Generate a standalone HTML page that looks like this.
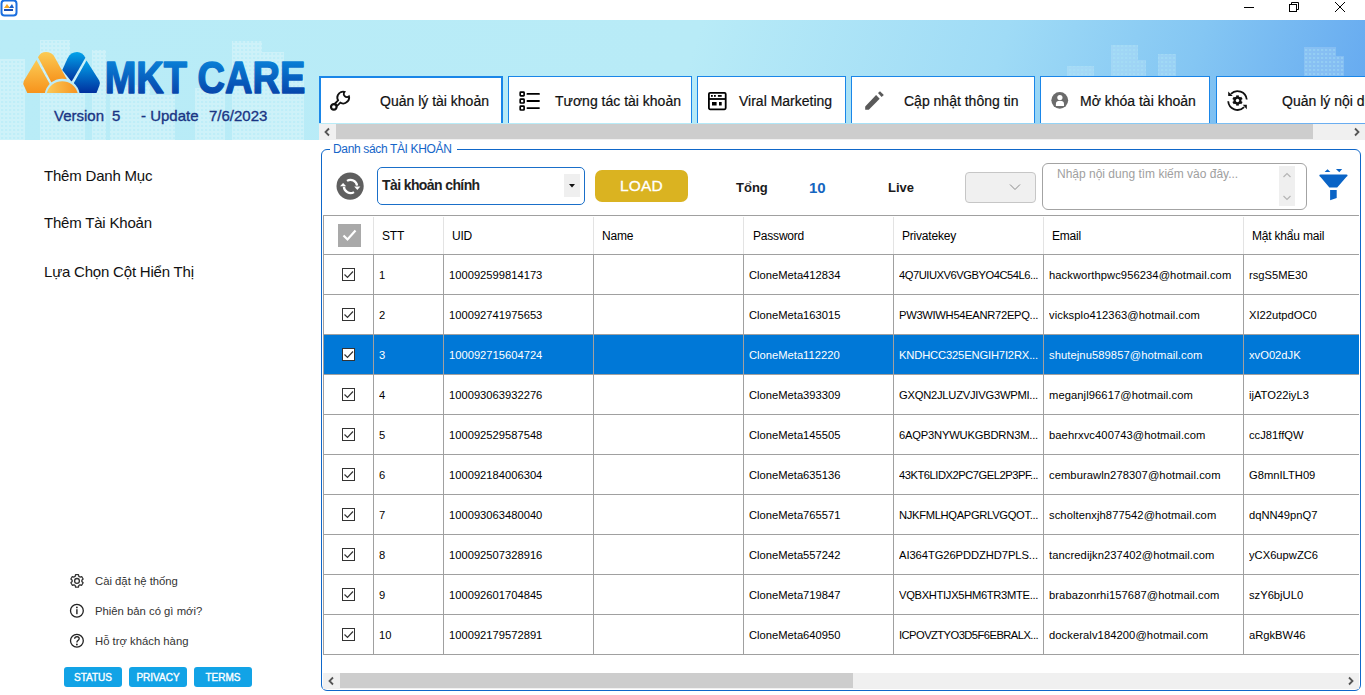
<!DOCTYPE html>
<html><head><meta charset="utf-8">
<style>
*{margin:0;padding:0;box-sizing:border-box}
html,body{width:1365px;height:695px;overflow:hidden;background:#fff;font-family:"Liberation Sans",sans-serif;color:#000}
.a{position:absolute}
.t{position:absolute;white-space:nowrap;line-height:1}
#banner{left:0;top:20px;width:1365px;height:120px;background:linear-gradient(108deg,#b9ecf7 0%,#b8ebf7 50%,#9fdbf6 72%,#84c6f3 86%,#64a8f0 100%);overflow:hidden}
.tab{position:absolute;top:76px;height:47px;background:#fff;border:1px solid #1a86e8;border-bottom:none}
.tab .lbl{position:absolute;top:16px;font-size:14px;color:#111;-webkit-text-stroke:0.2px #111;white-space:nowrap;line-height:16px}
.sb{position:absolute;background:#f0f0f0}
.thumb{position:absolute;background:#cdcdcd}
.grid{position:absolute;left:323px;top:215px;width:1036px;height:440px;overflow:hidden}
.hl{position:absolute;left:0;width:1036px;height:1px;background:#a0a0a0}
.vl{position:absolute;top:40px;width:1px;height:400px;background:#a0a0a0}
.vh{position:absolute;top:2px;width:1px;height:37px;background:#e3e3e3}
.hd{position:absolute;top:14px;font-size:12px;letter-spacing:-0.2px;line-height:14px;white-space:nowrap}
.row{position:absolute;left:0;width:1036px;height:40px}
.row .c{position:absolute;top:13px;font-size:11.2px;line-height:14px;white-space:nowrap;overflow:hidden}
.sel{background:#0078d7;color:#fff}
.cb{position:absolute;left:19px;top:13px;width:13px;height:13px;border:1px solid #333;background:#fff}
.menu{position:absolute;left:44px;font-size:15px;letter-spacing:-0.2px;color:#111;white-space:nowrap;line-height:1}
.set{position:absolute;left:95px;font-size:11.3px;color:#333;white-space:nowrap;line-height:1}
.btn{position:absolute;top:667px;width:58px;height:20px;background:#12a3e6;border-radius:3px;color:#fff;font-size:10px;font-weight:normal;-webkit-text-stroke:0.35px #fff;text-align:center;line-height:22px}
</style></head><body>

<!-- title bar -->
<div class="a" style="left:0;top:0;width:1365px;height:20px;background:#fff"></div>
<svg class="a" style="left:0;top:0" width="20" height="20" viewBox="0 0 20 20">
  <rect x="1.5" y="0.5" width="15" height="15" rx="3" fill="#fff" stroke="#1a6fe0" stroke-width="2"/>
  <path d="M4 8 L7 4 L10 8 Z" fill="#f5a623"/><path d="M9 8 L12 4 L14 8 Z" fill="#1a5fc8"/>
  <rect x="4" y="9" width="9" height="2" fill="#1a4fb0"/>
</svg>
<svg class="a" style="left:1230px;top:0" width="135" height="20" viewBox="0 0 135 20">
  <line x1="14" y1="7.5" x2="24" y2="7.5" stroke="#000" stroke-width="1"/>
  <rect x="59.5" y="4.5" width="7" height="7" fill="none" stroke="#000" stroke-width="1"/>
  <path d="M61.5 4.5 V2.5 H68.5 V9.5 H66.5" fill="none" stroke="#000" stroke-width="1"/>
  <path d="M105 2 L115 12 M115 2 L105 12" stroke="#000" stroke-width="1"/>
</svg>

<!-- banner -->
<div id="banner" class="a"></div>



<!-- skyline -->
<svg class="a" style="left:0;top:20px" width="1365" height="120" viewBox="0 20 1365 120">
  <defs>
    <pattern id="win" width="4" height="4" patternUnits="userSpaceOnUse"><rect width="4" height="4" fill="rgba(255,255,255,0.30)"/><rect x="1" y="1" width="2.2" height="2" fill="rgba(185,236,247,0.75)"/></pattern>
  </defs>
  <g fill="url(#win)">
    <rect x="0" y="59" width="25" height="81"/>
    <rect x="40" y="40" width="30" height="100"/>
    <rect x="70" y="55" width="15" height="85"/>
    <rect x="92" y="50" width="14" height="90"/>
    <rect x="110" y="85" width="40" height="55"/>
    <rect x="150" y="95" width="25" height="45"/>
    <rect x="195" y="88" width="30" height="52"/>
    <rect x="232" y="41" width="30" height="99"/>
    <rect x="262" y="52" width="22" height="88"/>
    <rect x="284" y="75" width="20" height="65"/>
    <g opacity="0.55"><rect x="1067" y="66" width="27" height="10"/>
    <rect x="1111" y="45" width="27" height="31"/>
    <rect x="1138" y="60" width="8" height="16"/>
    <rect x="1158" y="54" width="18" height="22"/>
    <rect x="1304" y="47" width="32" height="29"/>
    <rect x="1336" y="56" width="8" height="20"/></g>
  </g>
</svg>
<!-- logo -->
<svg class="a" style="left:0;top:20px" width="320" height="120" viewBox="0 20 320 120">
  <defs>
    <linearGradient id="og" x1="0" y1="0" x2="0" y2="1"><stop offset="0" stop-color="#fbcb55"/><stop offset="1" stop-color="#f7931c"/></linearGradient>
    <linearGradient id="oh" x1="0" y1="0" x2="1" y2="0"><stop offset="0" stop-color="#fbc957"/><stop offset="1" stop-color="#f79420"/></linearGradient>
    <linearGradient id="bg" x1="0" y1="0" x2="0" y2="1"><stop offset="0" stop-color="#02a3ea"/><stop offset="1" stop-color="#01309e"/></linearGradient>
    <linearGradient id="tg" x1="0" y1="0" x2="0" y2="1"><stop offset="0" stop-color="#0a90e2"/><stop offset="1" stop-color="#0536a0"/></linearGradient>
  </defs>
  <path d="M36.4 60.1 L23.8 81.1 Q22.6 83.6 24.2 86.2 L27.3 92.9 L46 92.9 L49.9 84.3 Z" fill="url(#og)"/>
  <path d="M38 57.3 Q40.5 52 46.2 52.1 Q51 52.2 53.7 55.6 L67 79.5 L51.4 82.5 Z" fill="url(#og)"/>
  <path d="M62.3 70.1 L67.5 58.4 Q70.8 52.1 77.1 52.1 Q82.5 52.3 85.4 57.7 L71.6 81.8 Z" fill="url(#bg)"/>
  <path d="M86.5 60.4 L99.2 80.5 Q100.6 83 99.4 85.5 L96.5 92.9 L78.5 92.9 L73.7 83.2 Z" fill="url(#bg)"/>
  <path d="M44.8 93.6 A17.6 17.6 0 0 1 79.6 93.6 Z" fill="#bdebf7"/><path d="M46.7 93 A16.1 16.1 0 0 1 77.7 93 Z" fill="url(#oh)"/>
  <text x="104.7" y="92.6" font-family="Liberation Sans" font-weight="bold" font-size="45" textLength="200.6" lengthAdjust="spacingAndGlyphs" fill="url(#tg)" stroke="url(#tg)" stroke-width="1.5" stroke-linejoin="round">MKT CARE</text>
</svg>
<div class="t" style="left:54px;top:108px;font-size:15px;color:#1a3584;-webkit-text-stroke:0.35px #1a3584">Version</div>
<div class="t" style="left:112px;top:108px;font-size:15px;color:#1a3584;-webkit-text-stroke:0.35px #1a3584">5</div>
<div class="t" style="left:141px;top:108px;font-size:15px;color:#1a3584;-webkit-text-stroke:0.35px #1a3584">- Update</div>
<div class="t" style="left:209px;top:108px;font-size:15px;color:#1a3584;-webkit-text-stroke:0.35px #1a3584">7/6/2023</div>

<!-- tabs -->
<div class="tab" style="left:319px;width:184px;border:2px solid #1a86e8;border-bottom:none"><span class="lbl" style="left:59px;top:15px">Quản lý tài khoản</span></div>
<div class="tab" style="left:508px;width:184px"><span class="lbl" style="left:46px">Tương tác tài khoản</span></div>
<div class="tab" style="left:697px;width:149px"><span class="lbl" style="left:41px">Viral Marketing</span></div>
<div class="tab" style="left:851px;width:184px"><span class="lbl" style="left:52px">Cập nhật thông tin</span></div>
<div class="tab" style="left:1040px;width:170px"><span class="lbl" style="left:39px">Mở khóa tài khoản</span></div>
<div class="tab" style="left:1216px;width:160px"><span class="lbl" style="left:65px">Quản lý nội dung</span></div>

<!-- tab icons -->
<svg class="a" style="left:326px;top:88px" width="28" height="26" viewBox="0 0 28 26"><path d="M20.10 3.45 A6.8 6.8 0 0 0 10.95 12.26 L8.17 15.02 A3.9 3.9 0 1 0 11.69 18.58 L14.47 15.82 A6.8 6.8 0 0 0 23.35 6.70 L22.58 7.48 A2.3 2.3 0 0 1 19.32 4.22 Z" fill="#111"/><path d="M17.04 4.60 A5 5 0 0 0 13.19 12.58 L10.37 15.38 L11.35 16.38 L14.17 13.58 A5 5 0 0 0 22.2 9.76 A4.1 4.1 0 0 1 17.04 4.60 Z" fill="#fff"/><circle cx="7.8" cy="18.9" r="1.7" fill="#fff"/></svg>
<svg class="a" style="left:514px;top:88px" width="30" height="26" viewBox="0 0 30 26"><g fill="none" stroke="#000" stroke-width="1.7"><rect x="6.2" y="4.1" width="3.9" height="3.8" rx="0.6"/><rect x="6.2" y="11.2" width="3.9" height="3.8" rx="0.6"/><rect x="6.2" y="18.2" width="3.9" height="3.8" rx="0.6"/></g><g stroke="#000" stroke-width="1.8" stroke-linecap="round"><line x1="13.4" y1="5.9" x2="25" y2="5.9"/><line x1="13.4" y1="13" x2="25" y2="13"/><line x1="13.4" y1="20.1" x2="25" y2="20.1"/></g></svg>
<svg class="a" style="left:704px;top:88px" width="26" height="26" viewBox="0 0 26 26"><rect x="4.9" y="4.8" width="16.8" height="16.5" rx="1.2" fill="none" stroke="#000" stroke-width="1.8"/><line x1="4.9" y1="11" x2="21.7" y2="11" stroke="#000" stroke-width="1.8"/><g fill="#000"><rect x="7" y="7" width="1.8" height="1.8"/><rect x="10" y="7" width="1.8" height="1.8"/><rect x="13.9" y="7" width="3.8" height="1.8"/><rect x="8" y="14" width="4.6" height="3.5"/><rect x="15" y="14" width="2.7" height="3.5"/></g></svg>
<svg class="a" style="left:860px;top:88px" width="28" height="26" viewBox="0 0 28 26"><g fill="#595959"><path d="M5.2 21.7 L5.2 18.4 L16.1 7.1 L19.7 10.7 L8.8 21.7 Z"/><path d="M18 5.1 L20 3.2 L23.8 6.9 L21.6 9 Z"/></g></svg>
<svg class="a" style="left:1046px;top:88px" width="26" height="26" viewBox="0 0 26 26"><circle cx="13.75" cy="12.35" r="8.4" fill="#6b6b6b"/><circle cx="13.9" cy="9.5" r="2.6" fill="#fff"/><path d="M9.9 18 L9.9 16 Q9.9 12.8 13.9 12.8 Q18 12.8 18 16 L18 18 Z" fill="#fff"/></svg>
<svg class="a" style="left:1222px;top:86px" width="30" height="28" viewBox="0 0 30 28"><g fill="none" stroke="#111" stroke-width="1.8"><path d="M8.9 7.9 A9.3 9.3 0 0 1 24.75 13.5"/><path d="M6.2 15.3 A9.3 9.3 0 0 0 22.1 21.1"/></g><g fill="#111"><path d="M6.2 5.4 L6.2 9.9 L10.7 9.9 Z"/><path d="M20.8 18.8 L24.8 18.8 L24.8 23.3 Z"/></g><g stroke="#111" stroke-width="2.7"><line x1="15.5" y1="9.4" x2="15.5" y2="19.6"/><line x1="11.08" y1="11.95" x2="19.92" y2="17.05"/><line x1="11.08" y1="17.05" x2="19.92" y2="11.95"/></g><circle cx="15.5" cy="14.5" r="3.9" fill="#111"/><circle cx="15.5" cy="14.5" r="1.7" fill="#fff"/></svg>

<!-- tab scrollbar -->
<div class="sb" style="left:319px;top:124px;width:1046px;height:16px"></div>
<div class="thumb" style="left:336px;top:124px;width:977px;height:15px"></div>
<svg class="a" style="left:319px;top:124px" width="17" height="16" viewBox="0 0 17 16"><path d="M10 4.5 L6.5 8 L10 11.5" fill="none" stroke="#555" stroke-width="1.8"/></svg>
<svg class="a" style="left:1348px;top:124px" width="17" height="16" viewBox="0 0 17 16"><path d="M7 4.5 L10.5 8 L7 11.5" fill="none" stroke="#555" stroke-width="1.8"/></svg>

<!-- group box -->
<div class="a" style="left:321px;top:149px;width:1040px;height:542px;border:1px solid #0f67c9;border-radius:6px"></div>
<div class="a" style="left:330px;top:142px;width:127px;height:14px;background:#fff"></div>
<div class="t" style="left:333px;top:143px;font-size:12px;letter-spacing:-0.35px;color:#1565c8">Danh sách TÀI KHOẢN</div>

<!-- toolbar -->
<svg class="a" style="left:336px;top:172px" width="29" height="29" viewBox="0 0 29 29">
  <circle cx="14.1" cy="14.1" r="13.6" fill="#5f5f5f"/>
  <path d="M11.0 8.9 A6.6 6.6 0 0 1 21.07 13.6" fill="none" stroke="#fff" stroke-width="2.3"/>
  <path d="M7.9 14.8 A6.6 6.6 0 0 0 18.0 20.1" fill="none" stroke="#fff" stroke-width="2.3"/>
  <path d="M18.2 14.6 L24.4 14.6 L21.3 17.9 Z" fill="#fff"/>
  <path d="M4.0 14.2 L10.2 14.2 L7.1 10.9 Z" fill="#fff"/>
</svg>
<div class="a" style="left:377px;top:167px;width:208px;height:38px;border:1px solid #1a6fc9;border-radius:5px;background:#fff"></div>
<div class="t" style="left:382px;top:178px;font-size:14px;letter-spacing:-0.6px;font-weight:bold;color:#222">Tài khoản chính</div>
<div class="a" style="left:564px;top:174px;width:16px;height:23px;background:#efefef"></div>
<svg class="a" style="left:564px;top:174px" width="16" height="23" viewBox="0 0 16 23"><path d="M5 10 L11 10 L8 13.5 Z" fill="#111"/></svg>
<div class="a" style="left:595px;top:170px;width:93px;height:32px;background:#dab321;border-radius:7px"></div>
<div class="t" style="left:620px;top:178px;font-size:15.5px;letter-spacing:0.2px;color:#fff;-webkit-text-stroke:0.3px #fff">LOAD</div>
<div class="t" style="left:736px;top:181px;font-size:13px;font-weight:bold;color:#1a1a1a">Tổng</div>
<div class="t" style="left:809px;top:180px;font-size:15px;font-weight:bold;color:#1565c0">10</div>
<div class="t" style="left:888px;top:181px;font-size:13px;font-weight:bold;color:#1a1a1a">Live</div>
<div class="a" style="left:965px;top:172px;width:71px;height:31px;background:#f0f0f0;border:1px solid #c6c6c6;border-radius:4px"></div>
<svg class="a" style="left:1005px;top:180px" width="20" height="14" viewBox="0 0 20 14"><path d="M5 4.5 L10 9.5 L15 4.5" fill="none" stroke="#8a8a8a" stroke-width="1"/></svg>
<div class="a" style="left:1042px;top:163px;width:265px;height:47px;border:1px solid #a3a3a3;border-radius:6px;background:#fff"></div>
<div class="t" style="left:1057px;top:168px;font-size:12px;color:#a0a0a0">Nhập nội dung tìm kiếm vào đây...</div>
<div class="a" style="left:1279px;top:166px;width:16px;height:40px;background:#efefef"></div>
<svg class="a" style="left:1279px;top:166px" width="16" height="40" viewBox="0 0 16 40"><path d="M4.5 11 L8 7.5 L11.5 11 M4.5 30 L8 33.5 L11.5 30" fill="none" stroke="#b5b5b5" stroke-width="1.2"/></svg>
<svg class="a" style="left:1318px;top:168px" width="31" height="34" viewBox="0 0 31 34">
  <path d="M2.6 6.4 L28.4 6.4 Q29.6 6.5 29.6 7.6 Q29.5 8.6 28.3 8.9 L19.2 19.6 L11.4 19.6 L2.5 8.9 Q1.3 8.6 1.3 7.6 Q1.4 6.5 2.6 6.4 Z" fill="#0a64c6"/>
  <path d="M12.1 21.9 L18.7 21.9 L18.7 30 L12.1 32.3 Z" fill="#0a64c6"/>
  <path d="M6.6 3.9 L9.5 1.2 L12.4 3.9 Z M17.9 1.1 L24.2 1.1 L21.3 4.2 Z" fill="#0a64c6"/>
</svg>
<div class="grid">
<div class="hl" style="top:0"></div>
<div class="a" style="left:15px;top:9px;width:23px;height:23px;background:#a9a9a9"></div>
<svg class="a" style="left:15px;top:9px" width="23" height="23" viewBox="0 0 23 23"><path d="M5.5 11.5 L9.5 15.5 L17.5 6.5" fill="none" stroke="#fff" stroke-width="2.2"/></svg>
<div class="vh" style="left:50px"></div>
<div class="vh" style="left:120px"></div>
<div class="vh" style="left:270px"></div>
<div class="vh" style="left:420px"></div>
<div class="vh" style="left:570px"></div>
<div class="vh" style="left:720px"></div>
<div class="vh" style="left:920px"></div>
<div class="hd" style="left:59px">STT</div>
<div class="hd" style="left:129px">UID</div>
<div class="hd" style="left:279px">Name</div>
<div class="hd" style="left:430px">Password</div>
<div class="hd" style="left:579px">Privatekey</div>
<div class="hd" style="left:729px">Email</div>
<div class="hd" style="left:929px">Mật khẩu mail</div>
<div class="row" style="top:40px">
<div class="cb"></div><svg class="a" style="left:19px;top:13px" width="13" height="13" viewBox="0 0 13 13"><path d="M2.5 6.5 L5.5 9.5 L11 3.5" fill="none" stroke="#333" stroke-width="1.2"/></svg>
<div class="c" style="left:56px;width:40px">1</div>
<div class="c" style="left:126px;width:140px">100092599814173</div>
<div class="c" style="left:426px;width:140px">CloneMeta412834</div>
<div class="c" style="left:576px;width:144px;letter-spacing:-0.473px">4Q7UIUXV6VGBYO4C54L6...</div>
<div class="c" style="left:726px;width:194px;letter-spacing:0.08px">hackworthpwc956234@hotmail.com</div>
<div class="c" style="left:926px;width:110px">rsgS5ME30</div>
</div>
<div class="row" style="top:80px">
<div class="cb"></div><svg class="a" style="left:19px;top:13px" width="13" height="13" viewBox="0 0 13 13"><path d="M2.5 6.5 L5.5 9.5 L11 3.5" fill="none" stroke="#333" stroke-width="1.2"/></svg>
<div class="c" style="left:56px;width:40px">2</div>
<div class="c" style="left:126px;width:140px">100092741975653</div>
<div class="c" style="left:426px;width:140px">CloneMeta163015</div>
<div class="c" style="left:576px;width:144px;letter-spacing:-0.309px">PW3WIWH54EANR72EPQ...</div>
<div class="c" style="left:726px;width:194px;letter-spacing:0.08px">vicksplo412363@hotmail.com</div>
<div class="c" style="left:926px;width:110px">XI22utpdOC0</div>
</div>
<div class="row sel" style="top:120px">
<div class="cb"></div><svg class="a" style="left:19px;top:13px" width="13" height="13" viewBox="0 0 13 13"><path d="M2.5 6.5 L5.5 9.5 L11 3.5" fill="none" stroke="#333" stroke-width="1.2"/></svg>
<div class="c" style="left:56px;width:40px">3</div>
<div class="c" style="left:126px;width:140px">100092715604724</div>
<div class="c" style="left:426px;width:140px">CloneMeta112220</div>
<div class="c" style="left:576px;width:144px;letter-spacing:-0.153px">KNDHCC325ENGIH7I2RX...</div>
<div class="c" style="left:726px;width:194px;letter-spacing:0.08px">shutejnu589857@hotmail.com</div>
<div class="c" style="left:926px;width:110px">xvO02dJK</div>
</div>
<div class="row" style="top:160px">
<div class="cb"></div><svg class="a" style="left:19px;top:13px" width="13" height="13" viewBox="0 0 13 13"><path d="M2.5 6.5 L5.5 9.5 L11 3.5" fill="none" stroke="#333" stroke-width="1.2"/></svg>
<div class="c" style="left:56px;width:40px">4</div>
<div class="c" style="left:126px;width:140px">100093063932276</div>
<div class="c" style="left:426px;width:140px">CloneMeta393309</div>
<div class="c" style="left:576px;width:144px;letter-spacing:-0.238px">GXQN2JLUZVJIVG3WPMI...</div>
<div class="c" style="left:726px;width:194px;letter-spacing:0.08px">meganjl96617@hotmail.com</div>
<div class="c" style="left:926px;width:110px">ijATO22iyL3</div>
</div>
<div class="row" style="top:200px">
<div class="cb"></div><svg class="a" style="left:19px;top:13px" width="13" height="13" viewBox="0 0 13 13"><path d="M2.5 6.5 L5.5 9.5 L11 3.5" fill="none" stroke="#333" stroke-width="1.2"/></svg>
<div class="c" style="left:56px;width:40px">5</div>
<div class="c" style="left:126px;width:140px">100092529587548</div>
<div class="c" style="left:426px;width:140px">CloneMeta145505</div>
<div class="c" style="left:576px;width:144px;letter-spacing:-0.199px">6AQP3NYWUKGBDRN3M...</div>
<div class="c" style="left:726px;width:194px;letter-spacing:0.08px">baehrxvc400743@hotmail.com</div>
<div class="c" style="left:926px;width:110px">ccJ81ffQW</div>
</div>
<div class="row" style="top:240px">
<div class="cb"></div><svg class="a" style="left:19px;top:13px" width="13" height="13" viewBox="0 0 13 13"><path d="M2.5 6.5 L5.5 9.5 L11 3.5" fill="none" stroke="#333" stroke-width="1.2"/></svg>
<div class="c" style="left:56px;width:40px">6</div>
<div class="c" style="left:126px;width:140px">100092184006304</div>
<div class="c" style="left:426px;width:140px">CloneMeta635136</div>
<div class="c" style="left:576px;width:144px;letter-spacing:-0.479px">43KT6LIDX2PC7GEL2P3PF...</div>
<div class="c" style="left:726px;width:194px;letter-spacing:0.08px">cemburawln278307@hotmail.com</div>
<div class="c" style="left:926px;width:110px">G8mnILTH09</div>
</div>
<div class="row" style="top:280px">
<div class="cb"></div><svg class="a" style="left:19px;top:13px" width="13" height="13" viewBox="0 0 13 13"><path d="M2.5 6.5 L5.5 9.5 L11 3.5" fill="none" stroke="#333" stroke-width="1.2"/></svg>
<div class="c" style="left:56px;width:40px">7</div>
<div class="c" style="left:126px;width:140px">100093063480040</div>
<div class="c" style="left:426px;width:140px">CloneMeta765571</div>
<div class="c" style="left:576px;width:144px;letter-spacing:-0.327px">NJKFMLHQAPGRLVGQOT...</div>
<div class="c" style="left:726px;width:194px;letter-spacing:0.08px">scholtenxjh877542@hotmail.com</div>
<div class="c" style="left:926px;width:110px">dqNN49pnQ7</div>
</div>
<div class="row" style="top:320px">
<div class="cb"></div><svg class="a" style="left:19px;top:13px" width="13" height="13" viewBox="0 0 13 13"><path d="M2.5 6.5 L5.5 9.5 L11 3.5" fill="none" stroke="#333" stroke-width="1.2"/></svg>
<div class="c" style="left:56px;width:40px">8</div>
<div class="c" style="left:126px;width:140px">100092507328916</div>
<div class="c" style="left:426px;width:140px">CloneMeta557242</div>
<div class="c" style="left:576px;width:144px;letter-spacing:-0.070px">AI364TG26PDDZHD7PLS...</div>
<div class="c" style="left:726px;width:194px;letter-spacing:0.08px">tancredijkn237402@hotmail.com</div>
<div class="c" style="left:926px;width:110px">yCX6upwZC6</div>
</div>
<div class="row" style="top:360px">
<div class="cb"></div><svg class="a" style="left:19px;top:13px" width="13" height="13" viewBox="0 0 13 13"><path d="M2.5 6.5 L5.5 9.5 L11 3.5" fill="none" stroke="#333" stroke-width="1.2"/></svg>
<div class="c" style="left:56px;width:40px">9</div>
<div class="c" style="left:126px;width:140px">100092601704845</div>
<div class="c" style="left:426px;width:140px">CloneMeta719847</div>
<div class="c" style="left:576px;width:144px;letter-spacing:-0.322px">VQBXHTIJX5HM6TR3MTE...</div>
<div class="c" style="left:726px;width:194px;letter-spacing:0.08px">brabazonrhi157687@hotmail.com</div>
<div class="c" style="left:926px;width:110px">szY6bjUL0</div>
</div>
<div class="row" style="top:400px">
<div class="cb"></div><svg class="a" style="left:19px;top:13px" width="13" height="13" viewBox="0 0 13 13"><path d="M2.5 6.5 L5.5 9.5 L11 3.5" fill="none" stroke="#333" stroke-width="1.2"/></svg>
<div class="c" style="left:56px;width:40px">10</div>
<div class="c" style="left:126px;width:140px">100092179572891</div>
<div class="c" style="left:426px;width:140px">CloneMeta640950</div>
<div class="c" style="left:576px;width:144px;letter-spacing:-0.552px">ICPOVZTYO3D5F6EBRALX...</div>
<div class="c" style="left:726px;width:194px;letter-spacing:0.08px">dockeralv184200@hotmail.com</div>
<div class="c" style="left:926px;width:110px">aRgkBW46</div>
</div>
<div class="hl" style="top:39px"></div>
<div class="hl" style="top:79px"></div>
<div class="hl" style="top:119px"></div>
<div class="hl" style="top:159px"></div>
<div class="hl" style="top:199px"></div>
<div class="hl" style="top:239px"></div>
<div class="hl" style="top:279px"></div>
<div class="hl" style="top:319px"></div>
<div class="hl" style="top:359px"></div>
<div class="hl" style="top:399px"></div>
<div class="hl" style="top:439px"></div>
<div class="a" style="left:0;top:0;width:1px;height:440px;background:#a0a0a0"></div>
<div class="vl" style="left:50px"></div>
<div class="vl" style="left:120px"></div>
<div class="vl" style="left:270px"></div>
<div class="vl" style="left:420px"></div>
<div class="vl" style="left:570px"></div>
<div class="vl" style="left:720px"></div>
<div class="vl" style="left:920px"></div>
</div>
<!-- grid scrollbar -->
<div class="sb" style="left:323px;top:673px;width:1036px;height:16px"></div>
<div class="thumb" style="left:340px;top:673px;width:513px;height:15px"></div>
<svg class="a" style="left:323px;top:673px" width="17" height="16" viewBox="0 0 17 16"><path d="M10 4.5 L6.5 8 L10 11.5" fill="none" stroke="#555" stroke-width="1.8"/></svg>
<svg class="a" style="left:1342px;top:673px" width="17" height="16" viewBox="0 0 17 16"><path d="M7 4.5 L10.5 8 L7 11.5" fill="none" stroke="#555" stroke-width="1.8"/></svg>

<!-- left panel -->
<div class="a" style="left:0;top:140px;width:319px;height:555px;background:#fff"></div>
<div class="menu" style="top:168px">Thêm Danh Mục</div>
<div class="menu" style="top:215px">Thêm Tài Khoản</div>
<div class="menu" style="top:264px">Lựa Chọn Cột Hiển Thị</div>


<!-- settings icons -->
<svg class="a" style="left:66px;top:570px" width="24" height="24" viewBox="0 0 24 24"><path d="M9.16 6.36 L9.56 4.66 L12.44 4.66 L12.84 6.36 L14.02 7.04 L15.68 6.54 L17.12 9.03 L15.85 10.22 L15.85 11.58 L17.12 12.77 L15.68 15.26 L14.02 14.76 L12.84 15.44 L12.44 17.14 L9.56 17.14 L9.16 15.44 L7.98 14.76 L6.32 15.26 L4.88 12.77 L6.15 11.58 L6.15 10.22 L4.88 9.03 L6.32 6.54 L7.98 7.04 Z" fill="none" stroke="#333" stroke-width="1.3" stroke-linejoin="round"/><circle cx="11" cy="10.9" r="2.4" fill="none" stroke="#333" stroke-width="1.3"/></svg>
<svg class="a" style="left:66px;top:600px" width="24" height="24" viewBox="0 0 24 24"><circle cx="10.9" cy="10.8" r="6.4" fill="none" stroke="#222" stroke-width="1.3"/><rect x="10.2" y="9.2" width="1.4" height="5" fill="#222"/><circle cx="10.9" cy="7.4" r="0.9" fill="#222"/></svg>
<svg class="a" style="left:66px;top:630px" width="24" height="24" viewBox="0 0 24 24"><circle cx="10.9" cy="10.7" r="6.4" fill="none" stroke="#222" stroke-width="1.3"/><path d="M8.6 8.8 Q8.8 6.6 11 6.6 Q13.2 6.7 13.2 8.6 Q13.2 9.9 11.8 10.6 Q10.9 11.1 10.9 12.4" fill="none" stroke="#222" stroke-width="1.3"/><circle cx="10.9" cy="14.5" r="0.9" fill="#222"/></svg>

<div class="set" style="top:576px">Cài đặt hệ thống</div>
<div class="set" style="top:606px">Phiên bản có gì mới?</div>
<div class="set" style="top:636px">Hỗ trợ khách hàng</div>
<div class="btn" style="left:64px">STATUS</div>
<div class="btn" style="left:129px">PRIVACY</div>
<div class="btn" style="left:194px">TERMS</div>

</body></html>
